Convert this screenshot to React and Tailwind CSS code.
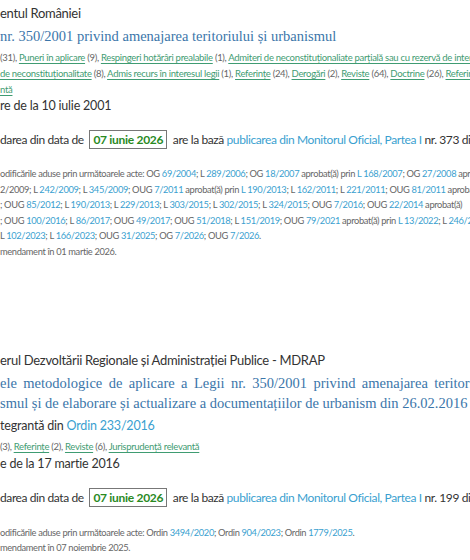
import React from "react";

const sans = { fontFamily: "Lato, 'Open Sans', sans-serif" };

function L({ children }) {
  return <span className="text-[#3a9fd0]">{children}</span>;
}
function G({ children }) {
  return <span className="text-[#3f9c72] underline underline-offset-2 decoration-[#3f9c72]">{children}</span>;
}

function DateBox() {
  return (
    <span className="inline-block border border-[#777] px-[3px] leading-[17px] font-bold text-[#2a8a1f] mx-[3px] tracking-[-0.3px]">07 iunie 2026</span>
  );
}

const serif = "font-['Liberation_Serif',serif] text-[14.5px] leading-[20px] text-[#3b76aa]";
const links = "text-[9.5px] tracking-[-0.3px] text-[#666]";
const small = "text-[9.3px] tracking-[-0.35px] text-[#666]";

export default function App() {
  return (
    <div className="w-[470px] h-[560px] overflow-hidden bg-white text-[#333] whitespace-nowrap" style={sans}>
      {/* Section 1 */}
      <div className="pt-[4px] text-[13px] leading-[18px] tracking-[-0.3px]">entul României</div>
      <div className={`mt-[4px] ${serif}`}>nr. 350/2001 privind amenajarea teritoriului și urbanismul</div>
      <div className={`mt-[4px] leading-[16px] ${links}`}>
        <div>(31), <G>Puneri în aplicare</G> (9), <G>Respingeri hotărâri prealabile</G> (1), <G>Admiteri de neconstituționaliate parțială sau cu rezervă de interpretare</G></div>
        <div><G>de neconstituționalitate</G> (8), <G>Admis recurs în interesul legii</G> (1), <G>Referințe</G> (24), <G>Derogări</G> (2), <G>Reviste</G> (64), <G>Doctrine</G> (26), <G>Referințe</G></div>
        <div><G>ntă</G></div>
      </div>
      <div className="text-[12.5px] leading-[16px] tracking-[-0.2px]">re de la 10 iulie 2001</div>
      <div className="mt-[15px] text-[12px] leading-[22px] tracking-[-0.4px]">darea din data de <DateBox /> are la bază <L>publicarea din Monitorul Oficial, Partea I</L> nr. 373 din 10 iulie 2001</div>
      <div className={`mt-[15px] leading-[15.6px] ${small}`}>
        <div>odificările aduse prin următoarele acte: OG <L>69/2004</L>; L <L>289/2006</L>; OG <L>18/2007</L> aprobat(ă) prin <L>L 168/2007</L>; OG <L>27/2008</L> aprobat(ă)</div>
        <div>2/2009; L <L>242/2009</L>; L <L>345/2009</L>; OUG <L>7/2011</L> aprobat(ă) prin <L>L 190/2013</L>; L <L>162/2011</L>; L <L>221/2011</L>; OUG <L>81/2011</L> aprobat(ă)</div>
        <div>; OUG <L>85/2012</L>; L <L>190/2013</L>; L <L>229/2013</L>; L <L>303/2015</L>; L <L>302/2015</L>; L <L>324/2015</L>; OUG <L>7/2016</L>; OUG <L>22/2014</L> aprobat(ă)</div>
        <div>; OUG <L>100/2016</L>; L <L>86/2017</L>; OUG <L>49/2017</L>; OUG <L>51/2018</L>; L <L>151/2019</L>; OUG <L>79/2021</L> aprobat(ă) prin <L>L 13/2022</L>; L <L>246/2022</L></div>
        <div>L <L>102/2023</L>; L <L>166/2023</L>; OUG <L>31/2025</L>; OG <L>7/2026</L>; OUG <L>7/2026</L>.</div>
        <div>mendament în 01 martie 2026.</div>
      </div>

      {/* Section 2 */}
      <div className="mt-[91px] text-[13px] leading-[18px] tracking-[-0.3px]">erul Dezvoltării Regionale și Administrației Publice - MDRAP</div>
      <div className={`mt-[4px] ${serif}`}>
        <div className="[word-spacing:2.8px]">ele metodologice de aplicare a Legii nr. 350/2001 privind amenajarea teritoriului</div>
        <div>smul și de elaborare și actualizare a documentațiilor de urbanism din 26.02.2016</div>
      </div>
      <div className="mt-[5px] text-[12.5px] leading-[16px] tracking-[-0.2px]">tegrantă din <L>Ordin 233/2016</L></div>
      <div className={`mt-[5px] leading-[16px] ${links}`}>(3), <G>Referințe</G> (2), <G>Reviste</G> (6), <G>Jurisprudență relevantă</G></div>
      <div className="mt-[1px] text-[12.5px] leading-[16px] tracking-[-0.2px]">e de la 17 martie 2016</div>
      <div className="mt-[15px] text-[12px] leading-[22px] tracking-[-0.4px]">darea din data de <DateBox /> are la bază <L>publicarea din Monitorul Oficial, Partea I</L> nr. 199 din 17 martie 2016</div>
      <div className={`mt-[16px] leading-[15.6px] ${small}`}>
        <div>odificările aduse prin următoarele acte: Ordin <L>3494/2020</L>; Ordin <L>904/2023</L>; Ordin <L>1779/2025</L>.</div>
        <div>mendament în 07 noiembrie 2025.</div>
      </div>
    </div>
  );
}
